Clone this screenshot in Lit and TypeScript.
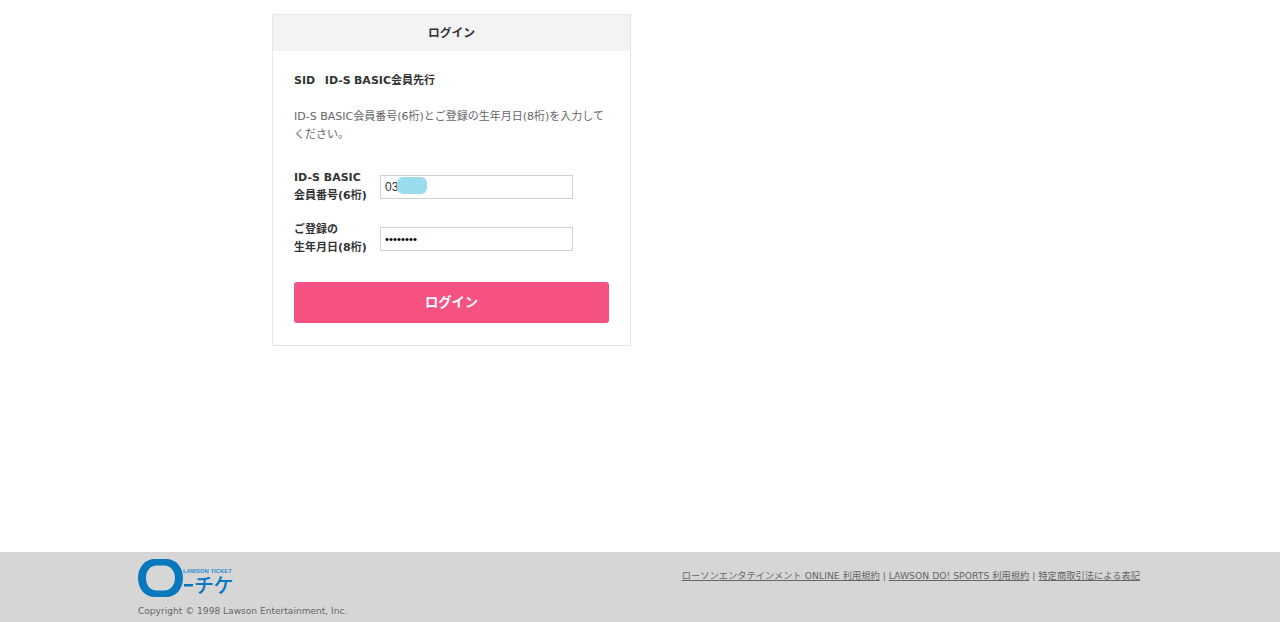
import { LitElement, html, css } from "lit";
import { customElement } from "lit/decorators.js";

@customElement("app-root")
export class AppRoot extends LitElement {
  static styles = css`
    :host {
      display: flex;
      flex-direction: column;
      height: 622px;
      overflow: hidden;
      background: #fff;
      color: #333;
      font-family: "DejaVu Sans", "Noto Sans CJK JP", sans-serif;
    }
    .main {
      flex: 1;
      padding: 14px 0 0 272px;
    }
    .card {
      box-sizing: border-box;
      width: 359px;
      height: 332px;
      border: 1px solid #e6e6e6;
    }
    .head {
      box-sizing: border-box;
      height: 36px;
      padding-bottom: 3px;
      background: #f3f3f3;
      display: flex;
      align-items: center;
      justify-content: center;
      font-size: 11.8px;
      font-weight: 700;
      font-family: "Noto Sans CJK JP", sans-serif;
    }
    .body {
      padding: 21px 20px 0 21px;
      display: flex;
      flex-direction: column;
    }
    .title {
      font-size: 11px;
      font-weight: 700;
      line-height: 18px;
      white-space: pre;
      word-spacing: -0.6px;
    }
    .desc {
      margin: 18px 0 0;
      font-size: 11px;
      line-height: 18px;
      color: #666;
    }
    .row {
      display: flex;
      align-items: center;
      gap: 13px;
    }
    .row.first { margin-top: 25px; }
    .row.second { margin-top: 16px; }
    .lab {
      width: 73px;
      font-size: 11px;
      font-weight: 700;
      line-height: 18px;
      white-space: nowrap;
    }
    .field { position: relative; display: flex; }
    input {
      box-sizing: border-box;
      width: 193px;
      height: 24px;
      border: 1px solid #d0d0d0;
      padding: 0 4px;
      margin: 0;
      outline: none;
      background: #fff;
      color: #333;
      font-family: "Liberation Sans", sans-serif;
      font-size: 12px;
    }
    input[type="password"] { color: #000; font-size: 11.4px; }
    .mask {
      position: absolute;
      left: 17px;
      top: 2px;
      width: 30px;
      height: 17px;
      border-radius: 6px;
      background: #9bdcec;
    }
    .btn {
      box-sizing: border-box;
      margin-top: 25px;
      width: 315px;
      height: 41px;
      border: 0;
      border-radius: 3px;
      background: #f55282;
      color: #fff;
      font-family: "Noto Sans CJK JP", sans-serif;
      font-size: 13.3px;
      font-weight: 700;
      padding: 0 0 3px;
    }
    .foot {
      height: 70px;
      background: #d6d6d6;
      padding: 0 140px 0 138px;
      display: flex;
      justify-content: space-between;
      align-items: flex-start;
      color: #666;
    }
    .brand { display: flex; flex-direction: column; }
    .logo {
      margin-top: 7px;
      height: 38px;
      width: 96px;
      position: relative;
    }
    .logo svg { display: block; }
    .lt {
      position: absolute;
      left: 45px;
      top: 8.5px;
      font-family: "Liberation Sans", sans-serif;
      font-weight: 700;
      font-size: 5.9px;
      line-height: 7px;
      white-space: nowrap;
      color: #2a8fcb;
    }
    .kana {
      position: absolute;
      left: 56px;
      top: 16px;
      font-family: "Noto Sans CJK JP", sans-serif;
      font-weight: 500;
      font-size: 20px;
      line-height: 20px;
      letter-spacing: -0.5px;
      white-space: nowrap;
      color: #0878bd;
    }
    .copy {
      margin-top: 8px;
      font-size: 9.07px;
      line-height: 13px;
      white-space: nowrap;
    }
    .links {
      margin-top: 17px;
      font-size: 9.27px;
      line-height: 14px;
      white-space: nowrap;
    }
    .links a { color: #666; text-decoration: underline; }
  `;

  render() {
    return html`
      <div class="main">
        <section class="card">
          <div class="head">ログイン</div>
          <div class="body">
            <div class="title">SID   ID-S BASIC会員先行</div>
            <p class="desc">ID-S BASIC会員番号(6桁)とご登録の生年月日(8桁)を入力してください。</p>
            <div class="row first">
              <div class="lab">ID-S BASIC<br />会員番号(6桁)</div>
              <div class="field">
                <input type="text" value="03" />
                <span class="mask"></span>
              </div>
            </div>
            <div class="row second">
              <div class="lab">ご登録の<br />生年月日(8桁)</div>
              <div class="field"><input type="password" value="19900101" /></div>
            </div>
            <button class="btn">ログイン</button>
          </div>
        </section>
      </div>
      <footer class="foot">
        <div class="brand">
          <div class="logo">
            <svg width="56" height="38" viewBox="0 0 56 38">
              <path fill="#0878bd" fill-rule="evenodd" d="M17 0h11c10 0 17 8 17 19s-7 19-17 19H17C7 38 0 30 0 19S7 0 17 0ZM19 6.500C12 6.500 8 12 8 19s4 12.500 11 12.500h7c7 0 11-6 11-12.500S33 6.500 26 6.500Z"></path>
              <rect x="46" y="25" width="9" height="2.500" fill="#0878bd"></rect>
            </svg>
            <span class="lt">LAWSON TICKET</span>
            <span class="kana">チケ</span>
          </div>
          <div class="copy">Copyright © 1998 Lawson Entertainment, Inc.</div>
        </div>
        <div class="links">
          <a href="#">ローソンエンタテインメント ONLINE 利用規約</a> | <a href="#">LAWSON DO! SPORTS 利用規約</a> | <a href="#">特定商取引法による表記</a>
        </div>
      </footer>
    `;
  }
}
